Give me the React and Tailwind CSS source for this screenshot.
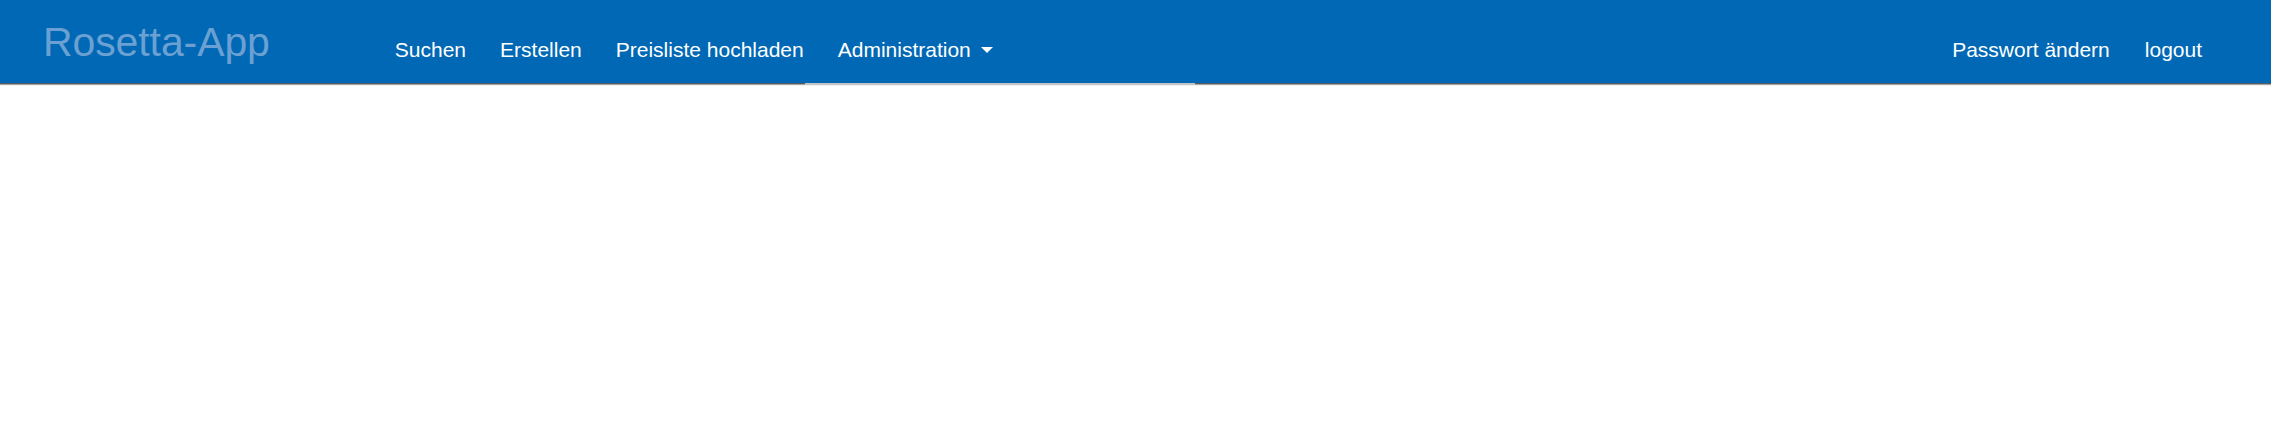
// Kopfzeile der Rosetta-App: Marke links, Hauptmenü, Benutzer-Links rechts.
import React from "react";

const MAIN_LINKS = ["Suchen", "Erstellen", "Preisliste hochladen"];
const USER_LINKS = ["Passwort ändern", "logout"];

export default function App() {
  return (
    <div className="min-h-[432px] bg-white font-['Liberation_Sans',Arial,sans-serif]">
      {/* ----- NAVBAR ----- */}
      <header className="relative h-[83px] bg-[#0068b5] flex items-start shadow-[0_1px_0_#4f5a63,0_2px_1px_rgba(0,0,0,0.35)]">
        <a className="pl-[43px] pt-[19px] text-[41px] leading-[47px] text-[#6ba0d2] tracking-[-0.1px]">
          Rosetta-App
        </a>

        <nav className="flex items-start pl-[125px] pt-[38px] gap-[34px] text-[21px] leading-[24px] text-white">
          {MAIN_LINKS.map((l) => (
            <a key={l}>{l}</a>
          ))}
          <a className="flex items-center gap-[10px]">
            Administration
            <span className="w-0 h-0 border-l-[6px] border-r-[6px] border-t-[6px] border-l-transparent border-r-transparent border-t-white" />
          </a>
        </nav>

        <nav className="ml-auto flex items-start pr-[69px] pt-[38px] gap-[35px] text-[21px] leading-[24px] text-white">
          {USER_LINKS.map((l) => (
            <a key={l}>{l}</a>
          ))}
        </nav>

        {/* versteckte Dropdown-Kante über dem Schatten */}
        <div className="absolute left-[805px] top-[83px] w-[390px] h-[2px] bg-[#c4c4c4]" />
      </header>
    </div>
  );
}
